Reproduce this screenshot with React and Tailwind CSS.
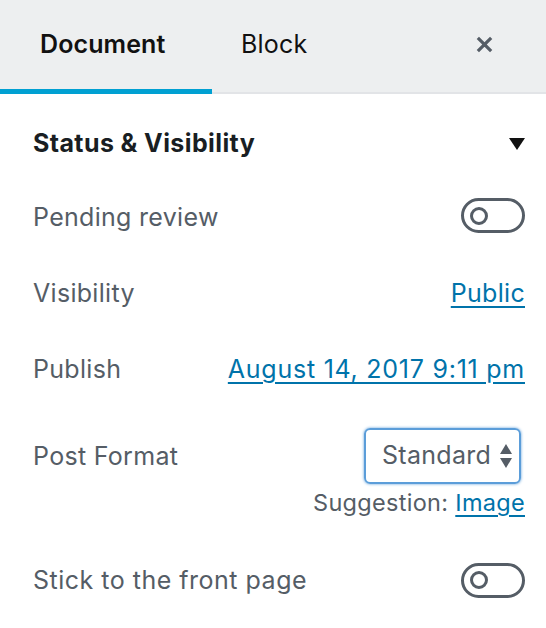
export default function App() {
  return (
    <div className="w-[546px] h-[628px] bg-white overflow-hidden" style={{ fontFamily: 'Inter, "Noto Sans", sans-serif' }}>
      <div className="h-[94px] bg-[#edeff0] border-b-2 border-[#e2e4e7] flex items-stretch">
        <div className="w-[212px] flex items-center pl-[40px] border-b-[5px] border-[#00a0d2] -mb-[2px] text-[25px] font-semibold text-[#111] tracking-[0.1px]">
          Document
        </div>
        <div className="flex items-center pl-[29px] text-[25px] text-[#111] pb-[3px] tracking-[0.2px]">
          Block
        </div>
        <div className="flex-1 flex items-center justify-end pr-[52px] pb-[3px]">
          <svg width="19" height="19" viewBox="0 0 20 20">
            <path d="M3 3 L17 17 M17 3 L3 17" stroke="#555d66" strokeWidth="3.4" strokeLinecap="butt" />
          </svg>
        </div>
      </div>

      <div className="pl-[33px] pr-[21px] text-[25px] tracking-[0.3px]">
        <div className="flex items-center justify-between h-[101px] pb-[1px]">
          <span className="font-bold text-[#191e23] tracking-[0.4px]">Status &amp; Visibility</span>
          <svg width="16" height="12" viewBox="0 0 16 12">
            <path d="M0 0 H16 L8 12 Z" fill="#111" />
          </svg>
        </div>

        <Row label="Pending review">
          <Toggle className="mb-[5px]" />
        </Row>
        <div className="h-[30px]" />
        <Row label="Visibility">
          <a className="text-[#0073aa] underline underline-offset-[4px]">Public</a>
        </Row>
        <div className="h-[30px]" />
        <Row label="Publish">
          <a className="text-[#0073aa] underline underline-offset-[4px] tracking-[0.75px]">August 14, 2017 9:11 pm</a>
        </Row>

        <div className="mt-[35px] flex items-start justify-between">
          <span className="pt-[10px] text-[#555d66]">Post Format</span>
          <div className="mr-[4px] w-[157px] h-[56px] border-2 border-[#5b9dd9] rounded-[6px] shadow-[0_0_3px_#5b9dd9] flex items-center justify-between pl-[16px] pr-[7px] text-[#555d66]">
            <span>Standard</span>
            <svg width="12" height="26" viewBox="0 0 12 26">
              <path d="M6 1 L12 11 H0 Z M6 25 L12 15 H0 Z" fill="#555d66" />
            </svg>
          </div>
        </div>
        <div className="mt-[1px] text-right text-[23.5px] text-[#555d66]">
          Suggestion: <a className="text-[#0073aa] underline underline-offset-[4px]">Image</a>
        </div>

        <div className="mt-[37px] flex items-center justify-between h-[46px]">
          <span className="text-[#555d66] tracking-[0.5px]">Stick to the front page</span>
          <Toggle />
        </div>
      </div>
    </div>
  );
}

function Row({ label, children }) {
  return (
    <div className="flex items-center justify-between h-[46px]">
      <span className="text-[#555d66]">{label}</span>
      {children}
    </div>
  );
}

function Toggle({ className = '' }) {
  return (
    <div className={`w-[64px] h-[35px] rounded-full border-[3px] border-[#555d66] flex items-center pl-[6px] ${className}`}>
      <div className="w-[18px] h-[18px] rounded-full border-[3px] border-[#555d66]" />
    </div>
  );
}
